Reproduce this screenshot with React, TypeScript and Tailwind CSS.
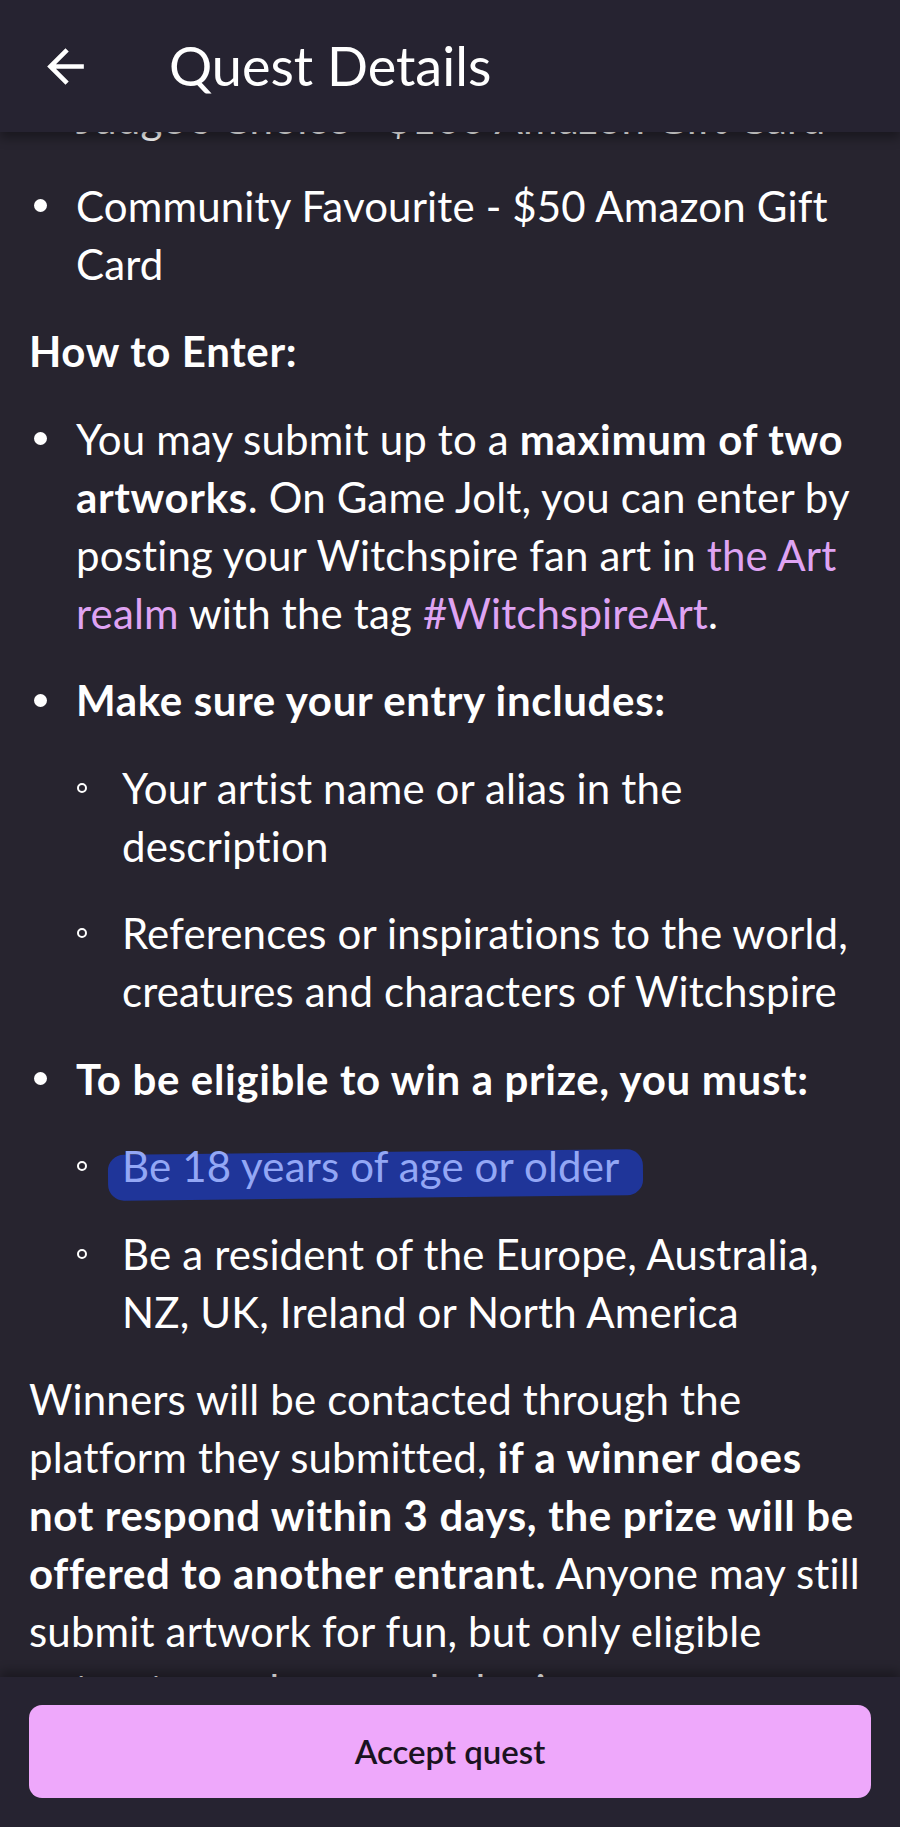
import React from 'react';

function Bullet({ sub = false, children }: { sub?: boolean; children: React.ReactNode }) {
  return (
    <li className="flex">
      <span className={sub ? 'flex h-[58px] w-[46px] shrink-0 items-center' : 'flex h-[58px] w-[47px] shrink-0 items-center'}>
        {sub ? (
          <span className="ml-[1px] h-[10px] w-[10px] rounded-full border-2 border-white" />
        ) : (
          <span className="ml-[5px] h-[13px] w-[13px] rounded-full bg-white" />
        )}
      </span>
      <div className="min-w-0 flex-1">{children}</div>
    </li>
  );
}

const Link = ({ children }: { children: React.ReactNode }) => (
  <span className="text-[#dfa3f3]">{children}</span>
);

const B = ({ children }: { children: React.ReactNode }) => (
  <b className="font-bold tracking-[0.65px]">{children}</b>
);

export default function App() {
  return (
    <div
      className="flex h-[1827px] w-full flex-col overflow-hidden bg-[#27242f] text-white"
      style={{ fontFamily: 'Lato, "Noto Sans", sans-serif' }}
    >
      <header className="relative z-10 flex h-[132px] shrink-0 items-center bg-[#262331] pl-[38px] shadow-[0_6px_10px_rgba(0,0,0,0.35)]">
        <svg viewBox="0 0 24 24" className="h-[55px] w-[55px] fill-white">
          <path d="M20 11H7.83l5.59-5.59L12 4l-8 8 8 8 1.41-1.41L7.83 13H20v-2z" />
        </svg>
        <h1 className="ml-[76px] text-[54px] leading-none">Quest Details</h1>
      </header>

      <main className="min-h-0 flex-1 overflow-hidden px-[29px] text-[42px] leading-[58px] tracking-[0.15px]">
        {/* scrolled part way down the quest description */}
        <div className="-mt-[43px] flex flex-col gap-[29.5px]">
          <ul className="flex flex-col gap-[29.5px]">
            <Bullet>Judge's Choice - $100 Amazon Gift Card</Bullet>
            <Bullet>
              Community Favourite - $50 Amazon Gift
              <br />
              Card
            </Bullet>
          </ul>

          <p>
            <B>How to Enter:</B>
          </p>

          <ul className="flex flex-col gap-[29.5px]">
            <Bullet>
              You may submit up to a <B>maximum of two</B>
              <br />
              <B>artworks</B>. On Game Jolt, you can enter by
              <br />
              posting your Witchspire fan art in <Link>the Art</Link>
              <br />
              <Link>realm</Link> with the tag <Link>#WitchspireArt</Link>.
            </Bullet>
            <Bullet>
              <p>
                <B>Make sure your entry includes:</B>
              </p>
              <ul className="mt-[29.5px] flex flex-col gap-[29.5px]">
                <Bullet sub>
                  Your artist name or alias in the
                  <br />
                  description
                </Bullet>
                <Bullet sub>
                  References or inspirations to the world,
                  <br />
                  creatures and characters of Witchspire
                </Bullet>
              </ul>
            </Bullet>
            <Bullet>
              <p>
                <B>To be eligible to win a prize, you must:</B>
              </p>
              <ul className="mt-[29.5px] flex flex-col gap-[29.5px]">
                <Bullet sub>
                  <span className="relative inline-block">
                    <span className="absolute -left-[14px] -right-[23px] top-[15px] h-[46px] rotate-[-0.6deg] rounded-[16px] bg-[#1f3599]" />
                    <span className="relative text-[#93a7f5]">Be 18 years of age or older</span>
                  </span>
                </Bullet>
                <Bullet sub>
                  Be a resident of the Europe, Australia,
                  <br />
                  NZ, UK, Ireland or North America
                </Bullet>
              </ul>
            </Bullet>
          </ul>

          <p>
            Winners will be contacted through the
            <br />
            platform they submitted, <B>if a winner does</B>
            <br />
            <B>not respond within 3 days, the prize will be</B>
            <br />
            <B>offered to another entrant.</B> Anyone may still
            <br />
            submit artwork for fun, but only eligible
            <br />
            entrants can be awarded prizes.
          </p>
        </div>
      </main>

      <footer className="relative z-10 h-[150px] shrink-0 bg-[#262331] px-[29px] pt-[28px] shadow-[0_-6px_10px_rgba(0,0,0,0.3)]">
        <button className="flex h-[93px] w-full items-center justify-center rounded-[13px] bg-[#eea8fb] text-[33px] font-semibold text-[#1a1320]">
          Accept quest
        </button>
      </footer>
    </div>
  );
}
